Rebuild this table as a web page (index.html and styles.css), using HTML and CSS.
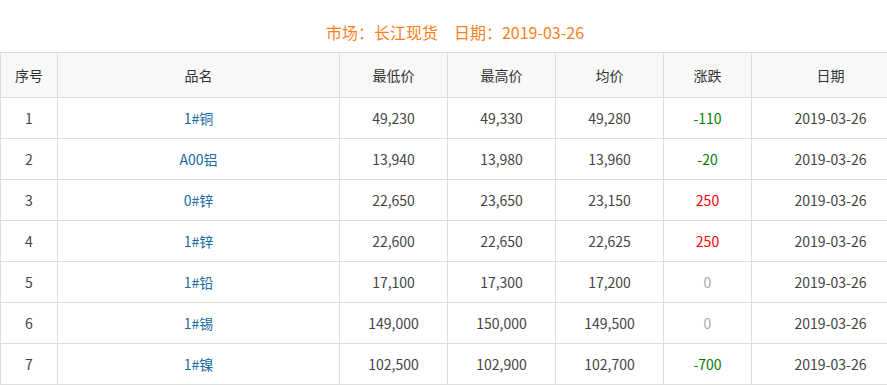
FILE: index.html
```html
<!DOCTYPE html>
<html lang="zh-CN">
<head>
<meta charset="UTF-8" />
<title>长江现货 行情</title>
<link rel="stylesheet" href="styles.css">
</head>
<body>
<div class="wrap">
  <div class="title"><span>市场：长江现货</span><span class="gap">日期：2019-03-26</span></div>
  <table class="price-table">
    <thead>
      <tr>
        <th class="c-no">序号</th>
        <th class="c-name">品名</th>
        <th class="c-num">最低价</th>
        <th class="c-num">最高价</th>
        <th class="c-num">均价</th>
        <th class="c-chg">涨跌</th>
        <th>日期</th>
      </tr>
    </thead>
    <tbody>
      <tr><td>1</td><td class="name">1#铜</td><td>49,230</td><td>49,330</td><td>49,280</td><td class="down">-110</td><td>2019-03-26</td></tr>
      <tr><td>2</td><td class="name">A00铝</td><td>13,940</td><td>13,980</td><td>13,960</td><td class="down">-20</td><td>2019-03-26</td></tr>
      <tr><td>3</td><td class="name">0#锌</td><td>22,650</td><td>23,650</td><td>23,150</td><td class="up">250</td><td>2019-03-26</td></tr>
      <tr><td>4</td><td class="name">1#锌</td><td>22,600</td><td>22,650</td><td>22,625</td><td class="up">250</td><td>2019-03-26</td></tr>
      <tr><td>5</td><td class="name">1#铅</td><td>17,100</td><td>17,300</td><td>17,200</td><td class="flat">0</td><td>2019-03-26</td></tr>
      <tr><td>6</td><td class="name">1#锡</td><td>149,000</td><td>150,000</td><td>149,500</td><td class="flat">0</td><td>2019-03-26</td></tr>
      <tr><td>7</td><td class="name">1#镍</td><td>102,500</td><td>102,900</td><td>102,700</td><td class="down">-700</td><td>2019-03-26</td></tr>
    </tbody>
  </table>
</div>
</body>
</html>
```
FILE: styles.css
```css
html, body { margin: 0; overflow: hidden; background: #fff; }
body { font-family: "Noto Sans CJK SC", "Microsoft YaHei", sans-serif; color: #444; font-size: 14px; }
.wrap { width: 910px; }
.title { height: 52px; line-height: 64px; text-align: center; color: #f7821b; font-size: 16px; font-family: "Noto Sans CJK JP", "Noto Sans CJK SC", sans-serif; }
.title .gap { margin-left: 16px; }
.price-table { width: 910px; border-collapse: collapse; table-layout: fixed; }
.price-table th, .price-table td { border: 1px solid #ddd; text-align: center; padding: 0; }
.price-table th { background: #f8f8f8; height: 44px; font-weight: normal; color: #333; }
.price-table td { height: 40px; }
.c-no { width: 56px; }
.c-name { width: 281px; }
.c-num { width: 107px; }
.c-chg { width: 87px; }
.name { color: #1b6aa5; }
.down { color: #008000; }
.up { color: #ff0000; }
.flat { color: #aaa; }
```
